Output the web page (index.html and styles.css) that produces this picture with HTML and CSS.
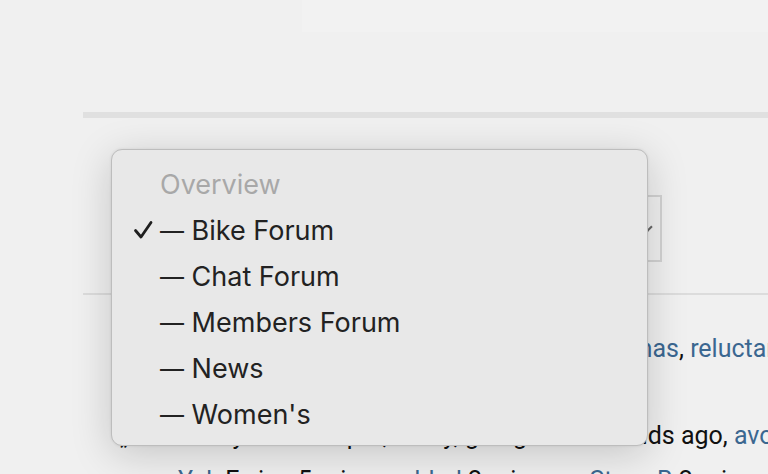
FILE: index.html
```html
<!DOCTYPE html>
<html>
<head>
<meta charset="utf-8">
<link rel="stylesheet" href="styles.css">
</head>
<body>
<div class="page">
  <div class="top-strip"><div class="top-panel"></div></div>
  <div class="content">
    <div class="bar"></div>
    <div class="filter-row">
      <div class="select"><span class="chev"></span></div>
    </div>
    <div class="rule"></div>
    <div class="line line1"><a>Cyclist</a>, <a>Rider</a>, <a>Bob</a>, <a>Jonas</a>, <a>Sam</a> and <a>Thomas</a>, <a>reluctant</a></div>
    <div class="line line2">„ Yesterday at 13:15 pm, many, going · 20 seconds ago, <a>avon</a></div>
    <div class="line line3"><a>Yuk</a> Ewing 5 min ago <a>bled</a> 2 min ago, <a>Steve B</a> 2 mins ago</div>
  </div>
  <div class="menu">
    <div class="item disabled"><span class="check"></span>Overview</div>
    <div class="item"><span class="check"><svg width="20" height="20" viewBox="0 0 20 20"><path d="M2.5 10.5 L8 17 L18 2.5" fill="none" stroke="#1e1e1e" stroke-width="2.8" stroke-linecap="round" stroke-linejoin="round"/></svg></span><span class="dash">—</span> Bike Forum</div>
    <div class="item"><span class="check"></span><span class="dash">—</span> Chat Forum</div>
    <div class="item"><span class="check"></span><span class="dash">—</span> Members Forum</div>
    <div class="item"><span class="check"></span><span class="dash">—</span> News</div>
    <div class="item"><span class="check"></span><span class="dash">—</span> Women's</div>
  </div>
</div>
</body>
</html>
```
FILE: styles.css
```css
html, body {
  margin: 0;
  padding: 0;
  background: #f0f0f0;
  width: 768px;
  height: 474px;
  overflow: hidden;
}
.page {
  position: relative;
  width: 768px;
  height: 474px;
  overflow: hidden;
  font-family: Roboto, "Liberation Sans", sans-serif;
}
.top-strip {
  height: 32px;
  display: flex;
  justify-content: flex-end;
}
.top-panel {
  width: 466px;
  height: 32px;
  background: #f2f2f2;
}
.content {
  margin-left: 83px;
  padding-top: 80px;
}
.bar {
  height: 6px;
  background: #e0e0e0;
}
.filter-row {
  display: flex;
  justify-content: flex-end;
  padding-right: 106px;
  padding-top: 77px;
  box-sizing: border-box;
  height: 176px;
}
.select {
  width: 300px;
  height: 67px;
  border: 2px solid #d2d2d2;
  box-sizing: border-box;
  position: relative;
}
.chev {
  position: absolute;
  right: 9px;
  top: 26px;
  width: 6px;
  height: 6px;
  border-right: 2px solid #666;
  border-bottom: 2px solid #666;
  transform: rotate(45deg);
}
.rule {
  height: 2px;
  background: #dcdcdc;
  margin-top: -1px;
}
.line {
  white-space: nowrap;
  font-size: 25px;
  color: #111;
  line-height: 30px;
}
.line a { color: #3b6790; }
.line1 { margin-top: 39px; margin-left: 114px; }
.line2 { margin-top: 57px; margin-left: 37px; }
.line3 { margin-top: 15px; margin-left: 95px; }

.menu {
  position: absolute;
  left: 111px;
  top: 149px;
  width: 537px;
  height: 297px;
  box-sizing: border-box;
  background: #e8e8e8;
  border: 1px solid #bdbdbd;
  border-radius: 11px;
  box-shadow: 0 8px 40px rgba(0,0,0,0.18), 0 0 3px rgba(0,0,0,0.08);
  padding-top: 11px;
  font-family: Inter, "Noto Sans", sans-serif;
  font-size: 27px;
  color: #222;
}
.item {
  height: 46px;
  display: flex;
  align-items: center;
  white-space: pre;
}
.item.disabled { color: #a8a8a8; }
.check {
  width: 48px;
  padding-left: 21px;
  box-sizing: border-box;
  display: flex;
  align-items: center;
}
.dash { font-size: 24px; }
```
